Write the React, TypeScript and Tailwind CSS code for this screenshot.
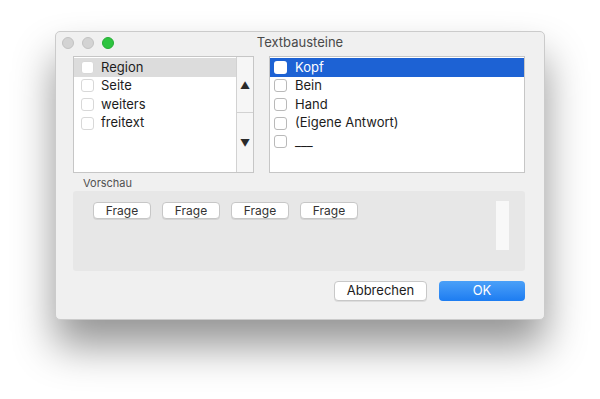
import React from "react";

const font = { fontFamily: "Inter, 'Noto Sans', sans-serif" };

function Box({ light, white }: { light?: boolean; white?: boolean }) {
  if (white) {
    return <span className="w-[13px] h-[13px] rounded-[3px] bg-white shrink-0" />;
  }
  return (
    <span
      className={
        "w-[13px] h-[13px] rounded-[3px] bg-white border shrink-0 " +
        (light ? "border-[#d8d8d8]" : "border-[#b9b9b9]")
      }
    />
  );
}

export default function App() {
  const left = ["Region", "Seite", "weiters", "freitext"];
  const right = ["Kopf", "Bein", "Hand", "(Eigene Antwort)", "___"];

  return (
    <div className="w-[600px] h-[399px] bg-white pt-[31px] pl-[55px]" style={font}>
      <div className="w-[490px] h-[289px] rounded-[5px] bg-[#f0f0f0] border border-[#cbcbcb] shadow-[0_26px_42px_rgba(0,0,0,0.42)] flex flex-col">
        {/* title bar */}
        <div className="relative h-[24px] flex items-center justify-center">
          <div className="absolute left-[6px] top-[5px] flex gap-[8px]">
            <span className="w-[12px] h-[12px] rounded-full bg-[#d3d3d3] border border-[#c2c2c2]" />
            <span className="w-[12px] h-[12px] rounded-full bg-[#d3d3d3] border border-[#c2c2c2]" />
            <span className="w-[12px] h-[12px] rounded-full bg-[#2ec440] border border-[#25ad35]" />
          </div>
          <span className="text-[13px] text-[#4a4a4a] mt-[-2px]">Textbausteine</span>
        </div>

        <div className="flex flex-col pl-[17px] pr-[19px]">
          {/* lists */}
          <div className="flex gap-[15px] h-[117px]">
            <div className="w-[181px] border border-[#c6c6c6] bg-white flex">
              <div className="flex-1 flex flex-col pt-[1px]">
                {left.map((t, i) => (
                  <div
                    key={t}
                    className={
                      "h-[18.6px] flex items-center gap-[7px] pl-[7px] text-[13px] text-[#1c1c1c] " +
                      (i === 0 ? "bg-[#dcdcdc]" : "")
                    }
                  >
                    <Box light />
                    <span>{t}</span>
                  </div>
                ))}
              </div>
              <div className="w-[17px] border-l border-[#d2d2d2] bg-[#f6f6f6] flex flex-col">
                <div className="h-[56px] border-b border-[#d2d2d2] flex items-center justify-center text-[10px] text-[#2a2a2a] pt-[2px]">
                  ▲
                </div>
                <div className="flex-1 flex items-center justify-center text-[10px] text-[#2a2a2a] pt-[2px]">
                  ▼
                </div>
              </div>
            </div>

            <div className="flex-1 border border-[#c6c6c6] bg-white flex flex-col pt-[1px]">
              {right.map((t, i) => (
                <div
                  key={t}
                  className={
                    "h-[18.6px] flex items-center gap-[8px] pl-[4px] text-[13px] " +
                    (i === 0 ? "bg-[#1d62d4] text-white" : "text-[#1c1c1c]")
                  }
                >
                  <Box white={i === 0} />
                  <span>{t}</span>
                </div>
              ))}
            </div>
          </div>

          {/* preview */}
          <div className="text-[11px] text-[#505050] pl-[10px] mt-[3px] h-[15px] leading-[15px]">Vorschau</div>
          <div className="h-[80px] bg-[#e7e7e7] rounded-[3px] flex items-start">
            <div className="flex gap-[11px] pl-[20px] pt-[11px]">
              {[0, 1, 2, 3].map((k) => (
                <div
                  key={k}
                  className="w-[58px] h-[17px] bg-white border border-[#c7c7c7] rounded-[4px] shadow-[0_1px_0_rgba(0,0,0,0.08)] flex items-center justify-center text-[12px] text-[#333]"
                >
                  Frage
                </div>
              ))}
            </div>
            <div className="ml-auto mr-[16px] mt-[10px] w-[13px] h-[49px] bg-[#f8f8f8]" />
          </div>

          {/* buttons */}
          <div className="flex justify-end gap-[12px] mt-[10px]">
            <div className="w-[93px] h-[20px] bg-white border border-[#c8c8c8] rounded-[4px] shadow-[0_1px_0_rgba(0,0,0,0.08)] flex items-center justify-center text-[13px] text-[#1c1c1c]">
              Abbrechen
            </div>
            <div className="w-[86px] h-[20px] rounded-[4px] bg-gradient-to-b from-[#4aa0f8] to-[#1c7cf1] flex items-center justify-center text-[13px] text-white">
              OK
            </div>
          </div>
        </div>
      </div>
    </div>
  );
}
